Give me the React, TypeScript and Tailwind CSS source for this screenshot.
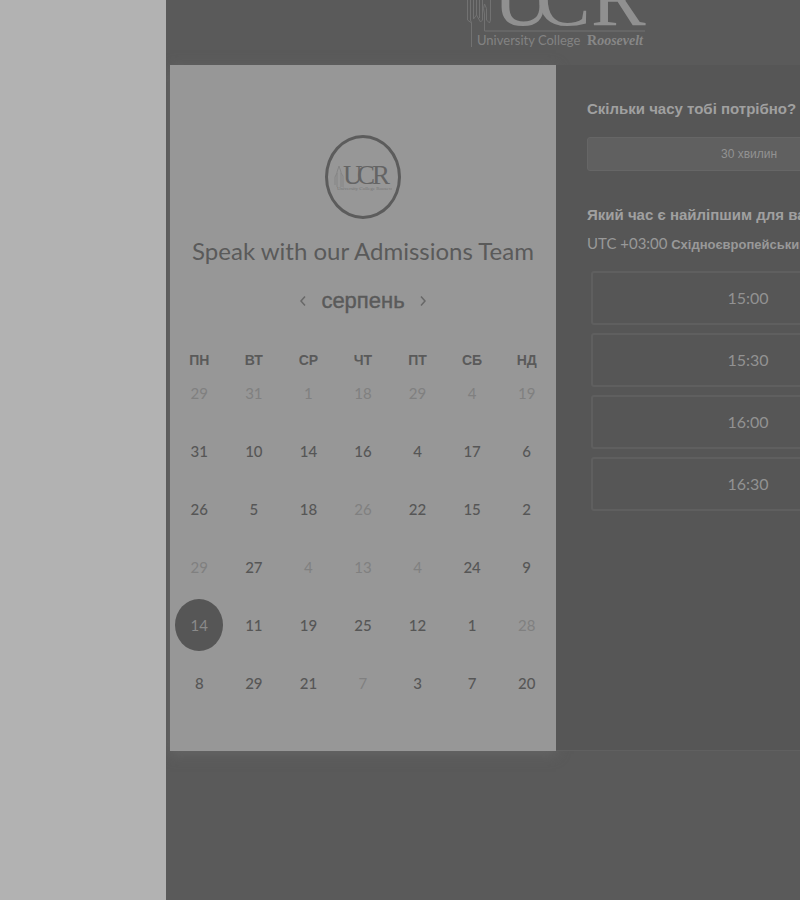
import React, { useState } from "react";

const weekdays = ["ПН", "ВТ", "СР", "ЧТ", "ПТ", "СБ", "НД"];

type Day = { n: number; off?: boolean };
const on = (n: number): Day => ({ n });
const off = (n: number): Day => ({ n, off: true });

const weeks: Day[][] = [
  [off(29), off(31), off(1), off(18), off(29), off(4), off(19)],
  [on(31), on(10), on(14), on(16), on(4), on(17), on(6)],
  [on(26), on(5), on(18), off(26), on(22), on(15), on(2)],
  [off(29), on(27), off(4), off(13), off(4), on(24), on(9)],
  [on(14), on(11), on(19), on(25), on(12), on(1), off(28)],
  [on(8), on(29), on(21), off(7), on(3), on(7), on(20)],
];

const slots = ["15:00", "15:30", "16:00", "16:30"];

function HeaderLogo() {
  return (
    <svg width="180" height="84" viewBox="0 0 180 84" className="shrink-0" role="img" aria-label="University College Roosevelt">
      <g fill="none" stroke="#727272" strokeWidth="1">
        <path d="M1.500 28V56L5.500 59V83" />
        <path d="M4.500 28V56L5.500 59M7.500 28V55L10.500 51L14.500 58L16.500 56V28" />
        <path d="M10.500 28V51M13.500 28V54" />
        <path d="M18.500 40Q16.500 44 18.500 50V67H179" />
        <path d="M18.500 40Q21.500 44 20.500 50V56L23.500 59L24.500 56V28" />
      </g>
      <g fill="#909090" fontFamily="'Liberation Serif', serif" fontSize="82">
        <text x="27" y="61">U</text>
        <text x="70" y="61">C</text>
        <text x="125" y="61">R</text>
      </g>
      <text x="11" y="81" fill="#838383" fontFamily="Lato, sans-serif" fontSize="13">University College</text>
      <text x="121" y="81" fill="#878787" fontFamily="'Liberation Serif', serif" fontSize="14" fontWeight="700">
        R<tspan fontStyle="italic">oosevelt</tspan>
      </text>
    </svg>
  );
}

function BadgeLogo() {
  return (
    <svg width="58" height="34" viewBox="0 0 58 34" role="img" aria-label="UCR">
      <path d="M3 27V12L5 6L7 12V27M1 25V17L3 13M7 13L9 16V27" fill="none" stroke="#858585" strokeWidth="1" />
      <g fill="#646464" fontFamily="'Liberation Serif', serif" fontSize="27">
        <text x="9" y="24">U</text>
        <text x="23" y="24">C</text>
        <text x="38" y="24">R</text>
      </g>
      <text x="3" y="30" fill="#757575" fontFamily="'Liberation Serif', serif" fontSize="5">University College Roosevelt</text>
    </svg>
  );
}

function Chevron({ d }: { d: string }) {
  return (
    <svg width="8" height="12" viewBox="0 0 8 12" fill="none" stroke="#686868" strokeWidth="1.500" aria-hidden="true">
      <path d={d} />
    </svg>
  );
}

function Calendar() {
  const [selected, setSelected] = useState("4-0");
  return (
    <section className="flex flex-col items-center bg-[#979797] px-[2px] pt-[70px] pb-9 text-[#5a5a5a] shadow-[0_3px_12px_#666666]">
      <div className="flex h-[84px] w-[76px] items-center justify-center rounded-[50%] border-3 border-[#5c5c5c]">
        <BadgeLogo />
      </div>
      <h1 className="mt-4 whitespace-nowrap font-[Lato,sans-serif] text-2xl leading-8">
        Speak with our Admissions Team
      </h1>
      <div className="mt-[22px] flex items-center gap-[14px]">
        <button type="button" aria-label="Попередній місяць"><Chevron d="M6 1.500L2 6L6 10.500" /></button>
        <h2 className="text-[22px] leading-6 [-webkit-text-stroke:0.4px_#5a5a5a]">серпень</h2>
        <button type="button" aria-label="Наступний місяць"><Chevron d="M2 1.500L6 6L2 10.500" /></button>
      </div>
      <table className="mt-10 w-full table-fixed border-collapse">
        <thead>
          <tr>
            {weekdays.map((d) => (
              <th key={d} scope="col" className="p-0 text-center text-sm leading-[14px] font-bold">{d}</th>
            ))}
          </tr>
        </thead>
        <tbody className="font-[Lato,sans-serif] text-[15px]">
          {weeks.map((week, r) => (
            <tr key={r}>
              {week.map((day, c) => {
                const id = `${r}-${c}`;
                const tone =
                  id === selected
                    ? "bg-[#565656] text-[#8a8a8a]"
                    : day.off
                      ? "text-[#808080]"
                      : "font-medium text-[#565656]";
                return (
                  <td key={id} className="p-0 pb-[6px]">
                    <button
                      type="button"
                      disabled={day.off}
                      onClick={() => setSelected(id)}
                      className={`mx-auto flex h-[52px] w-12 items-center justify-center rounded-[50%] ${tone}`}
                    >
                      {day.n}
                    </button>
                  </td>
                );
              })}
            </tr>
          ))}
        </tbody>
      </table>
    </section>
  );
}

function Times() {
  return (
    <section className="min-w-0 border-b border-[#606060] bg-[#565656] px-[31px] pt-8 text-[#a0a0a0]">
      <h2 className="text-[15px] leading-6 font-bold whitespace-nowrap">Скільки часу тобі потрібно?</h2>
      <button type="button" className="mt-4 flex h-[34px] w-full items-center justify-center rounded-[3px] border border-[#666666] bg-[#606060] text-xs text-[#929292]">
        30 хвилин
      </button>
      <h2 className="mt-8 text-[15px] leading-6 font-bold whitespace-nowrap">Який час є найліпшим для вас?</h2>
      <p className="mt-[6px] text-[13px] leading-5 whitespace-nowrap text-[#999999]">
        <span className="font-[Lato,sans-serif] text-[15px]">UTC +03:00</span>{" "}
        <b>Східноєвропейський час</b>
      </p>
      <div className="mt-4 mr-[6px] ml-1 flex flex-col gap-2">
        {slots.map((t) => (
          <button key={t} type="button" className="h-[54px] rounded-[3px] border-2 border-[#5f5f5f] font-[Lato,sans-serif] text-base text-[#929292]">
            {t}
          </button>
        ))}
      </div>
    </section>
  );
}

export default function App() {
  return (
    <div className="flex min-h-screen overflow-hidden bg-[#b2b2b2] font-['Liberation_Sans',Arial,sans-serif]">
      <aside className="w-[166px] shrink-0" />
      <main className="min-w-0 flex-1 overflow-hidden bg-[#5a5a5a] pl-1">
        <div className="min-w-[772px]">
          <header className="flex h-[65px] items-end justify-center overflow-hidden pb-[17px]">
            <HeaderLogo />
          </header>
          <div className="grid grid-cols-2">
            <Calendar />
            <Times />
          </div>
        </div>
      </main>
    </div>
  );
}
